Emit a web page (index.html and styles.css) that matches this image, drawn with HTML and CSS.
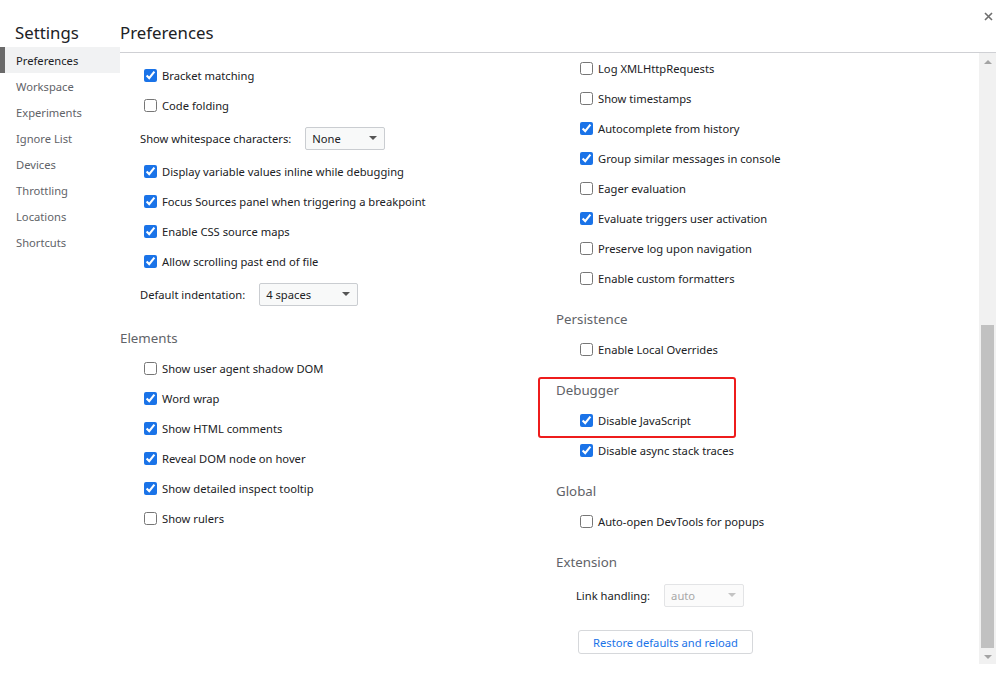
FILE: index.html
```html
<!DOCTYPE html>
<html lang="en">
<head>
<meta charset="utf-8">
<title>Settings</title>
<link rel="stylesheet" href="styles.css">
</head>
<body>
<div class="app">
  <nav class="sidebar">
    <div class="side-title">Settings</div>
    <ul class="tabs">
      <li class="tab selected">Preferences</li>
      <li class="tab">Workspace</li>
      <li class="tab">Experiments</li>
      <li class="tab">Ignore List</li>
      <li class="tab">Devices</li>
      <li class="tab">Throttling</li>
      <li class="tab">Locations</li>
      <li class="tab">Shortcuts</li>
    </ul>
  </nav>
  <main class="main">
    <header class="header">
      <h1 class="title">Preferences</h1>
      <button class="close" aria-label="Close">
        <svg width="9" height="9" viewBox="0 0 9 9"><path d="M1 1L8 8M8 1L1 8" stroke="#6e6e6e" stroke-width="1.6" fill="none"/></svg>
      </button>
    </header>
    <div class="body">
      <div class="columns">
        <div class="col col-left">
          <label class="row"><input type="checkbox" checked><span>Bracket matching</span></label>
          <label class="row"><input type="checkbox"><span>Code folding</span></label>
          <div class="select-row"><span class="sel-label">Show whitespace characters:</span><div class="select w79"><span>None</span><i class="arrow"></i></div></div>
          <label class="row"><input type="checkbox" checked><span>Display variable values inline while debugging</span></label>
          <label class="row"><input type="checkbox" checked><span>Focus Sources panel when triggering a breakpoint</span></label>
          <label class="row"><input type="checkbox" checked><span>Enable CSS source maps</span></label>
          <label class="row"><input type="checkbox" checked><span>Allow scrolling past end of file</span></label>
          <div class="select-row"><span class="sel-label">Default indentation:</span><div class="select w98"><span>4 spaces</span><i class="arrow"></i></div></div>
          <h2 class="section">Elements</h2>
          <label class="row"><input type="checkbox"><span>Show user agent shadow DOM</span></label>
          <label class="row"><input type="checkbox" checked><span>Word wrap</span></label>
          <label class="row"><input type="checkbox" checked><span>Show HTML comments</span></label>
          <label class="row"><input type="checkbox" checked><span>Reveal DOM node on hover</span></label>
          <label class="row"><input type="checkbox" checked><span>Show detailed inspect tooltip</span></label>
          <label class="row"><input type="checkbox"><span>Show rulers</span></label>
        </div>
        <div class="col col-right">
          <label class="row"><input type="checkbox"><span>Log XMLHttpRequests</span></label>
          <label class="row"><input type="checkbox"><span>Show timestamps</span></label>
          <label class="row"><input type="checkbox" checked><span>Autocomplete from history</span></label>
          <label class="row"><input type="checkbox" checked><span>Group similar messages in console</span></label>
          <label class="row"><input type="checkbox"><span>Eager evaluation</span></label>
          <label class="row"><input type="checkbox" checked><span>Evaluate triggers user activation</span></label>
          <label class="row"><input type="checkbox"><span>Preserve log upon navigation</span></label>
          <label class="row"><input type="checkbox"><span>Enable custom formatters</span></label>
          <h2 class="section">Persistence</h2>
          <label class="row"><input type="checkbox"><span>Enable Local Overrides</span></label>
          <div class="group">
            <h2 class="section">Debugger</h2>
            <label class="row"><input type="checkbox" checked><span>Disable JavaScript</span></label>
            <div class="highlight"></div>
          </div>
          <label class="row"><input type="checkbox" checked><span>Disable async stack traces</span></label>
          <h2 class="section">Global</h2>
          <label class="row"><input type="checkbox"><span>Auto-open DevTools for popups</span></label>
          <h2 class="section">Extension</h2>
          <div class="select-row"><span class="sel-label">Link handling:</span><div class="select w80 disabled"><span>auto</span><i class="arrow"></i></div></div>
          <button class="restore">Restore defaults and reload</button>
        </div>
      </div>
      <div class="scrollbar">
        <i class="sb-up"></i>
        <div class="sb-space"></div>
        <div class="sb-thumb"></div>
        <i class="sb-down"></i>
      </div>
    </div>
  </main>
</div>
</body>
</html>
```

FILE: styles.css
```css
* { box-sizing: border-box; }
html, body {
  margin: 0;
  padding: 0;
  background: #ffffff;
}
body {
  font-family: "Noto Sans", "Open Sans", sans-serif;
  font-size: 11.2px;
  color: #202124;
}
.app {
  display: flex;
  height: 675px;
  width: 1006px;
}
.sidebar {
  width: 120px;
  flex: none;
}
.side-title {
  height: 47px;
  padding: 21px 0 0 15px;
  font-size: 16.8px;
  line-height: 24px;
  color: #202124;
}
.tabs {
  list-style: none;
  margin: 0;
  padding: 0;
}
.tab {
  height: 26px;
  line-height: 26px;
  padding: 1px 0 0 16px;
  color: #5f6368;
}
.tab.selected {
  background: #f1f2f3;
  color: #202124;
  border-left: 5px solid #6a6a6a;
  padding-left: 11px;
}
.main {
  flex: 1;
  display: flex;
  flex-direction: column;
  padding-right: 10px;
}
.header {
  height: 53px;
  border-bottom: 1px solid #cfd0d4;
  display: flex;
  justify-content: space-between;
  align-items: flex-start;
  flex: none;
}
.title {
  margin: 21px 0 0 0;
  font-size: 16.8px;
  font-weight: normal;
  line-height: 24px;
  color: #202124;
}
.close {
  margin: 10px 2px 0 0;
  border: 0;
  background: none;
  padding: 0;
  width: 12px;
  height: 12px;
  display: flex;
  align-items: center;
  justify-content: center;
}
.body {
  display: flex;
  height: 611px;
  flex: none;
}
.columns {
  flex: 1;
  display: flex;
  overflow: hidden;
}
.col {
  display: flex;
  flex-direction: column;
  align-items: flex-start;
}
.col-left {
  width: 436px;
  padding-top: 7px;
}
.col-right {
  flex: 1;
}
.row {
  height: 30px;
  display: flex;
  align-items: center;
  padding-left: 24px;
  white-space: nowrap;
}
.row input {
  margin: 0 5px 0 0;
  width: 13px;
  height: 13px;
  accent-color: #1a73e8;
}
.select-row {
  height: 36px;
  display: flex;
  align-items: center;
  padding-left: 20px;
  white-space: nowrap;
}
.select {
  margin-left: 14px;
  height: 23px;
  border: 1px solid #cacdd1;
  border-radius: 2px;
  background: #f8f9f9;
  display: flex;
  align-items: center;
  justify-content: space-between;
  padding: 0 7px 0 6px;
  color: #202124;
}
.w79 { width: 80px; }
.w98 { width: 99px; }
.w80 { width: 80px; }
.arrow {
  width: 0;
  height: 0;
  border-left: 4px solid transparent;
  border-right: 4px solid transparent;
  border-top: 4px solid #555;
}
.select.disabled {
  color: #a8a8a8;
  border-color: #e3e4e6;
  background: #fbfbfb;
}
.select.disabled .arrow {
  border-top-color: #c4c4c4;
}
.section {
  margin: 16px 0 5px 0;
  font-size: 13.3px;
  font-weight: normal;
  line-height: 20px;
  height: 20px;
  color: #5f6368;
}
.group {
  position: relative;
  display: flex;
  flex-direction: column;
  align-items: flex-start;
}
.highlight {
  position: absolute;
  left: -18px;
  top: 13px;
  width: 198px;
  height: 61px;
  border: 2px solid #ee1c1c;
  border-radius: 3px;
}
.restore {
  margin: 17px 0 0 22px;
  width: 175px;
  height: 24px;
  border: 1px solid #d6d8db;
  border-radius: 3px;
  background: #ffffff;
  color: #1a73e8;
  font-family: inherit;
  font-size: 11.2px;
  padding: 0;
}
.scrollbar {
  width: 17px;
  flex: none;
  background: #f1f1f1;
  display: flex;
  flex-direction: column;
  align-items: center;
}
.sb-up, .sb-down {
  width: 0;
  height: 0;
  border-left: 4px solid transparent;
  border-right: 4px solid transparent;
  flex: none;
}
.sb-up {
  margin-top: 7px;
  border-bottom: 4px solid #a3a3a3;
}
.sb-down {
  margin: 7px 0 5px 0;
  border-top: 4px solid #a3a3a3;
}
.sb-space {
  flex: 1;
}
.sb-thumb {
  width: 13px;
  height: 323px;
  background: #c1c1c1;
  flex: none;
}
```
